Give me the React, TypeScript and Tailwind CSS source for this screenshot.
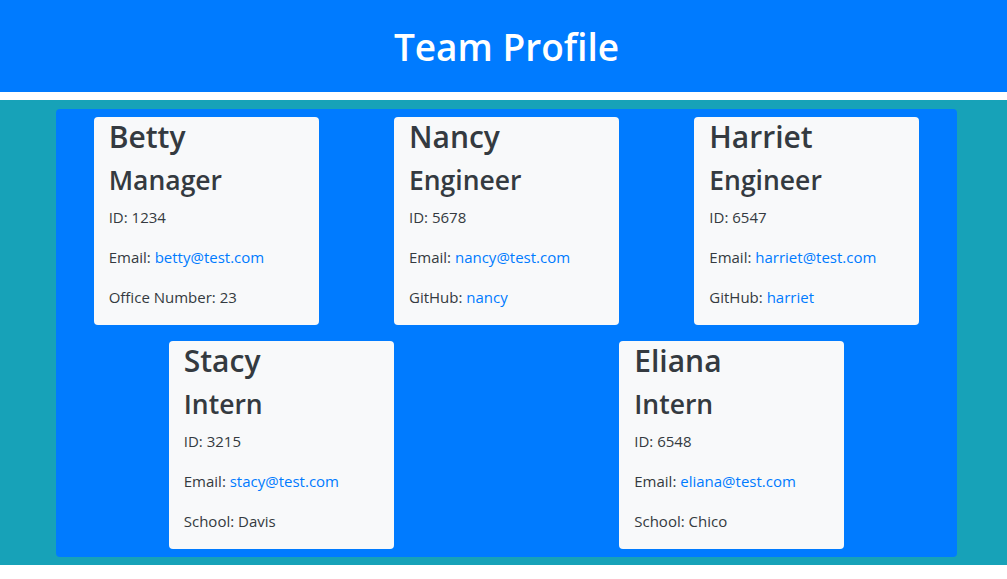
import React from "react";

type Member = {
  name: string;
  role: string;
  id: string;
  email: string;
  extraLabel: string;
  extraValue: string;
  extraLink?: boolean;
};

const members: Member[] = [
  { name: "Betty", role: "Manager", id: "1234", email: "betty@test.com", extraLabel: "Office Number", extraValue: "23" },
  { name: "Nancy", role: "Engineer", id: "5678", email: "nancy@test.com", extraLabel: "GitHub", extraValue: "nancy", extraLink: true },
  { name: "Harriet", role: "Engineer", id: "6547", email: "harriet@test.com", extraLabel: "GitHub", extraValue: "harriet", extraLink: true },
  { name: "Stacy", role: "Intern", id: "3215", email: "stacy@test.com", extraLabel: "School", extraValue: "Davis" },
  { name: "Eliana", role: "Intern", id: "6548", email: "eliana@test.com", extraLabel: "School", extraValue: "Chico" },
];

function Card({ m }: { m: Member }) {
  return (
    <div className="m-2 w-[225px] rounded bg-[#f8f9fa] px-[15px] text-[#343a40]">
      <h2 className="mb-2 pt-[2px] text-[30px] leading-[36.4px] font-semibold">{m.name}</h2>
      <h3 className="mb-2 pt-[2px] text-[26.5px] leading-[31.6px] font-semibold">{m.role}</h3>
      <p className="mb-4 text-[15px] leading-6">ID: {m.id}</p>
      <p className="mb-4 text-[15px] leading-6">
        Email: <a className="text-[#007bff]">{m.email}</a>
      </p>
      <p className="mb-4 text-[15px] leading-6">
        {m.extraLabel}:{" "}
        {m.extraLink ? <a className="text-[#007bff]">{m.extraValue}</a> : m.extraValue}
      </p>
    </div>
  );
}

export default function App() {
  return (
    <div className="min-h-[579px] bg-white font-['Open_Sans',sans-serif]">
      <header className="flex h-[92px] items-center justify-center bg-[#007bff] pl-[6px]">
        <h1 className="pt-[2px] text-[37px] leading-[1.2] font-semibold text-white">Team Profile</h1>
      </header>
      <section className="mt-2 bg-[#17a2b8] pt-[9px] pb-2">
        <div className="ml-[56px] flex w-[901px] flex-wrap justify-around rounded bg-[#007bff]">
          {members.map((m) => (
            <Card key={m.name} m={m} />
          ))}
        </div>
      </section>
    </div>
  );
}
